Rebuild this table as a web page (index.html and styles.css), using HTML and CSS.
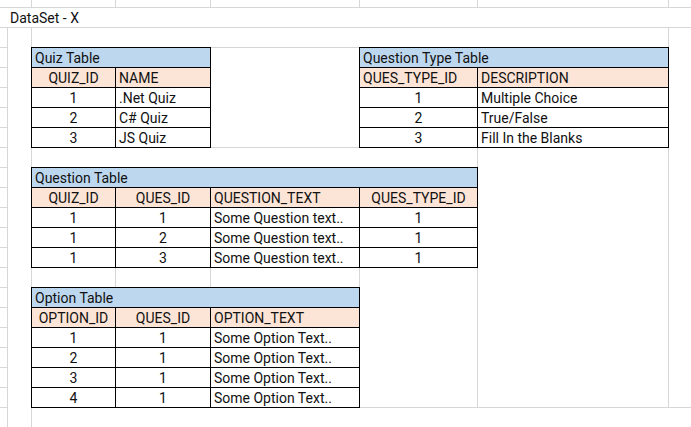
FILE: index.html
```html
<!DOCTYPE html>
<html>
<head>
<meta charset="utf-8">
<title>DataSet - X</title>
<link rel="stylesheet" href="styles.css">
</head>
<body>
<div class="sheet">
  <div class="tick tick-b"></div>
  <div class="tick tick-c"></div>
  <div class="tick tick-d"></div>
  <div class="tick tick-e"></div>
  <div class="tick tick-f"></div>
  <div class="tick tick-g"></div>

  <div class="sheet-title">DataSet - X</div>
  <div class="row-line"></div>
  <div class="left-strip"></div>
  <div class="edge edge-a"></div>
  <div class="edge edge-b"></div>
  <div class="edge edge-f"></div>
  <div class="edge edge-g"></div>
  <div class="bottom-line"></div>
  <div class="gap-d gap-d-top"></div>
  <div class="gap-d gap-d-bottom"></div>
  <div class="gap-v gap-v-c"></div>
  <div class="gap-v gap-v-d"></div>
  <div class="gap-v gap-v-e"></div>

  <div class="tbl quiz">
    <div class="cell cap">Quiz Table</div>
    <div class="cell hd ctr">QUIZ_ID</div>
    <div class="cell hd">NAME</div>
    <div class="cell ctr">1</div><div class="cell">.Net Quiz</div>
    <div class="cell ctr">2</div><div class="cell">C# Quiz</div>
    <div class="cell ctr">3</div><div class="cell">JS Quiz</div>
  </div>

  <div class="tbl qtype">
    <div class="cell cap">Question Type Table</div>
    <div class="cell hd">QUES_TYPE_ID</div>
    <div class="cell hd">DESCRIPTION</div>
    <div class="cell ctr">1</div><div class="cell">Multiple Choice</div>
    <div class="cell ctr">2</div><div class="cell">True/False</div>
    <div class="cell ctr">3</div><div class="cell">Fill In the Blanks</div>
  </div>

  <div class="tbl question">
    <div class="cell cap">Question Table</div>
    <div class="cell hd ctr">QUIZ_ID</div>
    <div class="cell hd ctr">QUES_ID</div>
    <div class="cell hd">QUESTION_TEXT</div>
    <div class="cell hd ctr">QUES_TYPE_ID</div>
    <div class="cell ctr">1</div><div class="cell ctr">1</div><div class="cell">Some Question text..</div><div class="cell ctr">1</div>
    <div class="cell ctr">1</div><div class="cell ctr">2</div><div class="cell">Some Question text..</div><div class="cell ctr">1</div>
    <div class="cell ctr">1</div><div class="cell ctr">3</div><div class="cell">Some Question text..</div><div class="cell ctr">1</div>
  </div>

  <div class="tbl option">
    <div class="cell cap">Option Table</div>
    <div class="cell hd ctr">OPTION_ID</div>
    <div class="cell hd ctr">QUES_ID</div>
    <div class="cell hd">OPTION_TEXT</div>
    <div class="cell ctr">1</div><div class="cell ctr">1</div><div class="cell">Some Option Text..</div>
    <div class="cell ctr">2</div><div class="cell ctr">1</div><div class="cell">Some Option Text..</div>
    <div class="cell ctr">3</div><div class="cell ctr">1</div><div class="cell">Some Option Text..</div>
    <div class="cell ctr">4</div><div class="cell ctr">1</div><div class="cell">Some Option Text..</div>
  </div>
</div>
</body>
</html>
```

FILE: styles.css
```css
:root {
  --grid: #d6d6d6;
}
html, body {
  margin: 0;
  padding: 0;
  background: #fff;
}
body {
  font-family: Roboto, "Liberation Sans", Arial, sans-serif;
  font-size: 14px;
  color: #111;
}
.sheet {
  display: grid;
  grid-template-columns: 7px 24px 84px 95px 149px 118px 191px 23px;
  grid-template-rows: 7px repeat(21, 20px);
  width: 691px;
  height: 427px;
  overflow: hidden;
}

/* top strip column edges */
.tick { grid-row: 1; border-left: 1px solid var(--grid); }
.tick-b { grid-column: 3; }
.tick-c { grid-column: 4; }
.tick-d { grid-column: 5; }
.tick-e { grid-column: 6; }
.tick-f { grid-column: 7; }
.tick-g { grid-column: 8; }

.sheet-title {
  grid-row: 2;
  grid-column: 1 / -1;
  border-top: 1px solid var(--grid);
  padding: 1px 0 0 10px;
  line-height: 18px;
  white-space: nowrap;
}
.row-line {
  grid-row: 3;
  grid-column: 1 / -1;
  border-top: 1px solid var(--grid);
}
.left-strip {
  grid-column: 1;
  grid-row: 4 / -1;
  background: repeating-linear-gradient(to bottom, var(--grid) 0 1px, transparent 1px 20px);
}
.edge { border-left: 1px solid var(--grid); }
.edge-a { grid-column: 2; grid-row: 3 / -1; }
.edge-b { grid-column: 3; grid-row: 3 / -1; }
.edge-f { grid-column: 7; grid-row: 9 / 22; }
.edge-g { grid-column: 8; grid-row: 3 / 22; }
.bottom-line {
  grid-column: 6 / -1;
  grid-row: 22;
  border-top: 1px solid var(--grid);
}
.gap-d { grid-column: 5; border-top: 1px solid var(--grid); }
.gap-d-top { grid-row: 4; }
.gap-d-bottom { grid-row: 9; }
.gap-v { grid-row: 15; border-left: 1px solid var(--grid); }
.gap-v-c { grid-column: 4; }
.gap-v-d { grid-column: 5; }
.gap-v-e { grid-column: 6; }

/* data tables */
.tbl {
  display: grid;
  gap: 1px;
  padding: 1px;
  background: #000;
  grid-auto-rows: 19px;
  align-self: start;
  justify-self: start;
  z-index: 1;
}
.quiz { grid-column: 3 / 5; grid-row: 4 / 9; grid-template-columns: 83px 94px; }
.qtype { grid-column: 6 / 8; grid-row: 4 / 9; grid-template-columns: 117px 190px; }
.question { grid-column: 3 / 7; grid-row: 10 / 15; grid-template-columns: 83px 94px 148px 117px; }
.option { grid-column: 3 / 6; grid-row: 16 / 22; grid-template-columns: 83px 94px 148px; }

.cell {
  background: #fff;
  padding: 1px 3px 0;
  line-height: 18px;
  white-space: nowrap;
  overflow: hidden;
}
.cap { grid-column: 1 / -1; background: #bdd7ee; }
.hd { background: #fce4d6; }
.ctr { text-align: center; }
```
